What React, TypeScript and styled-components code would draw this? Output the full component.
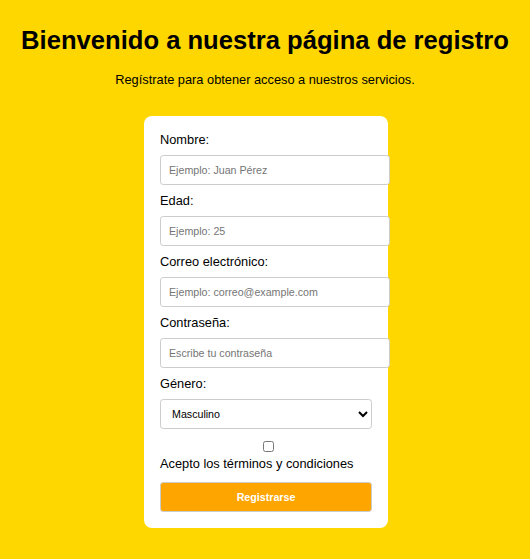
import React from "react";
import styled, { createGlobalStyle } from "styled-components";

const GlobalStyle = createGlobalStyle`
  html, body {
    margin: 0;
    padding: 0;
    background: #ffd700;
  }
  body {
    font-family: "Liberation Sans", Arial, sans-serif;
    color: #000;
  }
  * { box-sizing: content-box; }
`;

const Page = styled.main`
  text-align: center;
  padding: 26px 0 32px;
`;

const Title = styled.h1`
  font-size: 25.6px;
  font-weight: bold;
  line-height: normal;
  margin: 0 0 17px;
`;

const Subtitle = styled.p`
  font-size: 12.8px;
  line-height: normal;
  margin: 0 0 29px;
`;

const Card = styled.form`
  width: 212px;
  margin: 0 auto;
  padding: 16px;
  background: #fff;
  border-radius: 8px;
  text-align: left;
  display: flex;
  flex-direction: column;
  position: relative;
  left: 1px;
`;

const Label = styled.label`
  display: block;
  font-size: 12.8px;
  line-height: normal;
  margin-bottom: 8px;
`;

const TextInput = styled.input`
  width: 212px;
  padding: 8px;
  margin: 0 0 8px;
  border: 1px solid #ccc;
  border-radius: 3.2px;
  font-family: "Liberation Sans", Arial, sans-serif;
  font-size: 10.67px;
  line-height: normal;
  height: 12px;
  color: #000;
  background: #fff;
  outline: none;
  &::placeholder {
    color: #757575;
  }
`;

const Select = styled.select`
  box-sizing: border-box;
  width: 212px;
  height: 30px;
  padding: 0 4px 0 7px;
  margin: 0 0 8px;
  border: 1px solid #ccc;
  border-radius: 3.2px;
  font-family: "Liberation Sans", Arial, sans-serif;
  font-size: 10.67px;
  color: #000;
  background: #fff;
  outline: none;
`;

const CheckRow = styled.div`
  display: flex;
  justify-content: center;
  padding-left: 5px;
  margin: 4px 0 4px;
`;

const Checkbox = styled.input`
  width: 10.5px;
  height: 10.5px;
  margin: 0;
`;

const TermsLabel = styled.label`
  display: block;
  font-size: 12.8px;
  line-height: normal;
  margin-bottom: 11px;
`;

const SubmitButton = styled.button`
  box-sizing: border-box;
  width: 212px;
  height: 30px;
  padding: 0;
  border: 1px solid #ccc;
  border-radius: 3.2px;
  background: #ffa500;
  color: #fff;
  font-family: "Liberation Sans", Arial, sans-serif;
  font-size: 10.67px;
  font-weight: bold;
  cursor: pointer;
`;

export default function App() {
  return (
    <>
      <GlobalStyle />
      <Page>
        <Title>Bienvenido a nuestra página de registro</Title>
        <Subtitle>Regístrate para obtener acceso a nuestros servicios.</Subtitle>
        <Card onSubmit={(e) => e.preventDefault()}>
          <Label htmlFor="nombre">Nombre:</Label>
          <TextInput id="nombre" type="text" placeholder="Ejemplo: Juan Pérez" />
          <Label htmlFor="edad">Edad:</Label>
          <TextInput id="edad" type="number" placeholder="Ejemplo: 25" />
          <Label htmlFor="correo">Correo electrónico:</Label>
          <TextInput id="correo" type="email" placeholder="Ejemplo: correo@example.com" />
          <Label htmlFor="pass">Contraseña:</Label>
          <TextInput id="pass" type="password" placeholder="Escribe tu contraseña" />
          <Label htmlFor="genero">Género:</Label>
          <Select id="genero" defaultValue="masculino">
            <option value="masculino">Masculino</option>
            <option value="femenino">Femenino</option>
            <option value="otro">Otro</option>
          </Select>
          <CheckRow>
            <Checkbox id="terminos" type="checkbox" />
          </CheckRow>
          <TermsLabel htmlFor="terminos">Acepto los términos y condiciones</TermsLabel>
          <SubmitButton type="submit">Registrarse</SubmitButton>
        </Card>
      </Page>
    </>
  );
}
